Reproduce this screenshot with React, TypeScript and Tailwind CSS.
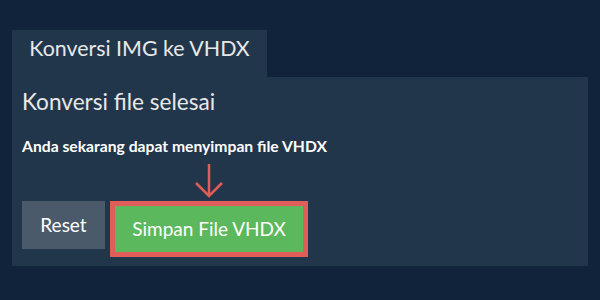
import React from "react";

export default function App() {
  return (
    <div
      className="w-[600px] h-[300px] bg-[#11233a] pt-[30px] px-[12px]"
      style={{ fontFamily: "Lato, 'Open Sans', sans-serif" }}
    >
      {/* Tab */}
      <div className="w-[255px] h-[47px] bg-[#22364b] flex justify-center pt-[6px] text-[21.4px] leading-[1.2] text-[#e8e8e8]">
        Konversi IMG ke VHDX
      </div>

      {/* Panel */}
      <div className="bg-[#22364b] h-[189px] pt-[11px] pl-[10px] pb-[10px] flex flex-col">
        <div className="text-[22.6px] leading-[1.2] text-[#e8e8e8]">Konversi file selesai</div>
        <div className="mt-[22px] text-[15.7px] leading-[1.2] font-bold text-white">
          Anda sekarang dapat menyimpan file VHDX
        </div>

        <div className="mt-[45px] flex items-start gap-[5px]">
          <button className="w-[83px] h-[48px] bg-[#4b5a6b] text-white text-[19px]">Reset</button>
          <div className="relative">
            <svg
              className="absolute left-1/2 -translate-x-1/2 -top-[38px]"
              width="32"
              height="36"
              viewBox="0 0 32 36"
              fill="none"
              stroke="#e05d5a"
              strokeWidth="2.5"
            >
              <line x1="16" y1="1" x2="16" y2="33" />
              <polyline points="3,20 16,33 29,20" />
            </svg>
            <button className="w-[198px] h-[56px] border-[5px] border-[#e05d5a] bg-[#5cb85c] text-white text-[19px]">
              Simpan File VHDX
            </button>
          </div>
        </div>
      </div>
    </div>
  );
}
